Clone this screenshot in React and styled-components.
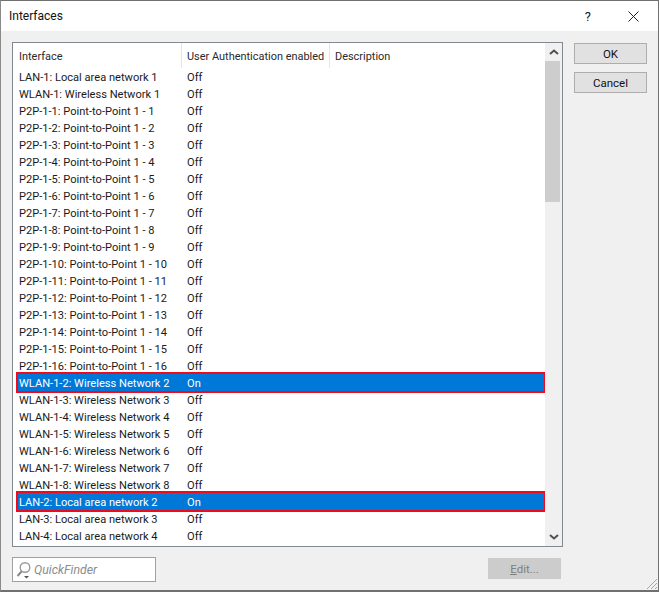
import React from 'react';
import styled, { createGlobalStyle } from 'styled-components';

const GlobalStyle = createGlobalStyle`
    html, body {
        margin: 0;
        padding: 0;
        background: #f0f0f0;
    }
    * {
        box-sizing: border-box;
    }
`;

const p2pRows = Array.from({ length: 16 }, (_, i) => ({
    name: `P2P-1-${i + 1}: Point-to-Point 1 - ${i + 1}`,
    auth: 'Off',
}));

const wlanRows = Array.from({ length: 7 }, (_, i) => ({
    name: `WLAN-1-${i + 2}: Wireless Network ${i + 2}`,
    auth: i === 0 ? 'On' : 'Off',
    selected: i === 0,
}));

const rows = [
    { name: 'LAN-1: Local area network 1', auth: 'Off' },
    { name: 'WLAN-1: Wireless Network 1', auth: 'Off' },
    ...p2pRows,
    ...wlanRows,
    { name: 'LAN-2: Local area network 2', auth: 'On', selected: true },
    { name: 'LAN-3: Local area network 3', auth: 'Off' },
    { name: 'LAN-4: Local area network 4', auth: 'Off' },
];

const App = () => {
    return (
        <Dialog>
            <GlobalStyle />
            <TitleBar>
                <Title>Interfaces</Title>
                <HelpMark>?</HelpMark>
                <CloseIcon width="11" height="11" viewBox="0 0 11 11">
                    <path d="M0.5 0.5 L10.5 10.5 M10.5 0.5 L0.5 10.5" stroke="#222" strokeWidth="1" fill="none" />
                </CloseIcon>
            </TitleBar>
            <Body>
                <TopArea>
                    <ListPanel>
                        <ListContent>
                            <HeaderRow>
                                <HeaderCell $width={169}>Interface</HeaderCell>
                                <HeaderCell $width={148}>User Authentication enabled</HeaderCell>
                                <HeaderCell>Description</HeaderCell>
                            </HeaderRow>
                            <RowList>
                                {rows.map((row) => (
                                    <Row key={row.name} $selected={row.selected}>
                                        <NameCell>{row.name}</NameCell>
                                        <span>{row.auth}</span>
                                    </Row>
                                ))}
                            </RowList>
                        </ListContent>
                        <ScrollBar>
                            <ScrollArrow width="10" height="6" viewBox="0 0 10 6">
                                <path d="M1 5 L5 1.5 L9 5" stroke="#505050" strokeWidth="2" fill="none" />
                            </ScrollArrow>
                            <ScrollTrack>
                                <ScrollThumb />
                            </ScrollTrack>
                            <ScrollArrow width="10" height="6" viewBox="0 0 10 6">
                                <path d="M1 1 L5 4.5 L9 1" stroke="#505050" strokeWidth="2" fill="none" />
                            </ScrollArrow>
                        </ScrollBar>
                    </ListPanel>
                    <SideButtons>
                        <Button>OK</Button>
                        <Button>Cancel</Button>
                    </SideButtons>
                </TopArea>
                <BottomArea>
                    <QuickFinder>
                        <svg width="18" height="18" viewBox="0 0 18 18">
                            <circle cx="10" cy="6.5" r="4.8" stroke="#9a9a9a" strokeWidth="1.4" fill="none" />
                            <path d="M6.5 10.5 L2.5 15" stroke="#8a8a8a" strokeWidth="2" fill="none" />
                            <path d="M9 15 L14 15 L11.5 17.5 Z" fill="#555" />
                        </svg>
                        <QuickFinderText>QuickFinder</QuickFinderText>
                    </QuickFinder>
                    <DisabledButton><u>E</u>dit...</DisabledButton>
                </BottomArea>
            </Body>
            <Grip width="14" height="14" viewBox="0 0 14 14">
                <path d="M13 3 L3 13 M13 7 L7 13 M13 11 L11 13" stroke="#a8a8a8" strokeWidth="1" fill="none" />
            </Grip>
        </Dialog>
    );
};

const Dialog = styled.div`
    position: relative;
    display: flex;
    flex-direction: column;
    width: 659px;
    height: 592px;
    overflow: hidden;
    background: #f0f0f0;
    border: 1px solid #707070;
    border-bottom-width: 2px;
    border-left-color: #8a8a8a;
    font-family: Roboto, "Liberation Sans", sans-serif;
    font-size: 11.1px;
    color: #1a1a1a;
`;

const TitleBar = styled.div`
    display: flex;
    align-items: center;
    height: 30px;
    flex-shrink: 0;
    background: #ffffff;
    padding: 0 19px 0 8px;
`;

const Title = styled.div`
    flex: 1;
    font-size: 12px;
    color: #111111;
`;

const HelpMark = styled.div`
    margin-right: 37px;
    font-size: 13px;
`;

const CloseIcon = styled.svg`
    display: block;
`;

const Body = styled.div`
    display: flex;
    flex-direction: column;
    flex: 1;
    padding: 11px 11px 0 11px;
`;

const TopArea = styled.div`
    display: flex;
    align-items: flex-start;
    gap: 11px;
`;

const ListPanel = styled.div`
    display: flex;
    width: 551px;
    height: 505px;
    background: #ffffff;
    border: 1px solid #828790;
`;

const ListContent = styled.div`
    flex: 1;
    min-width: 0;
`;

const HeaderRow = styled.div`
    display: flex;
    height: 25px;
`;

const HeaderCell = styled.div`
    display: flex;
    align-items: center;
    flex: ${(props) => (props.$width ? `0 0 ${props.$width}px` : '1')};
    padding: 1px 0 0 5px;
    font-size: 10.95px;
    white-space: nowrap;
    border-right: ${(props) => (props.$width ? '1px solid #e5e5e5' : 'none')};
    color: #2a2a2a;

    &:first-child {
        padding-left: 6px;
    }
`;

const RowList = styled.div`
    display: flex;
    flex-direction: column;
`;

const Row = styled.div`
    display: flex;
    align-items: center;
    height: 17px;
    line-height: 17px;
    margin: 0 1px 0 5px;
    padding: 1px 0 0 1px;
    white-space: nowrap;
    background: ${(props) => (props.$selected ? '#0078d7' : 'transparent')};
    color: ${(props) => (props.$selected ? '#ffffff' : '#1a1a1a')};
    outline: ${(props) => (props.$selected ? '2px solid #f20a1a' : 'none')};
    outline-offset: 0;
`;

const NameCell = styled.span`
    flex: 0 0 168px;
`;

const ScrollBar = styled.div`
    display: flex;
    flex-direction: column;
    align-items: center;
    flex: 0 0 17px;
    background: #f0f0f0;
`;

const ScrollArrow = styled.svg`
    display: block;
    margin: 6px 0;
    flex-shrink: 0;
`;

const ScrollTrack = styled.div`
    flex: 1;
    width: 100%;
`;

const ScrollThumb = styled.div`
    width: 15px;
    height: 141px;
    background: #cdcdcd;
`;

const SideButtons = styled.div`
    display: flex;
    flex-direction: column;
    gap: 8px;
    padding-top: 1px;
`;

const Button = styled.div`
    display: flex;
    align-items: center;
    justify-content: center;
    width: 73px;
    height: 21px;
    background: #e1e1e1;
    border: 1px solid #adadad;
    color: #111111;
    font-size: 11.5px;
`;

const BottomArea = styled.div`
    display: flex;
    align-items: flex-start;
    justify-content: space-between;
    width: 549px;
    margin-top: 10px;
`;

const QuickFinder = styled.div`
    display: flex;
    align-items: center;
    gap: 1px;
    width: 144px;
    height: 25px;
    padding-left: 2px;
    background: #ffffff;
    border: 1px solid #a0a0a0;
`;

const QuickFinderText = styled.span`
    font-style: italic;
    font-size: 12.3px;
    color: #8c8c8c;
`;

const DisabledButton = styled(Button)`
    margin-top: 1px;
    background: #cccccc;
    border-color: #cccccc;
    color: #7e7e7e;
`;

const Grip = styled.svg`
    position: absolute;
    right: 0;
    bottom: 0;
`;

export default App;
